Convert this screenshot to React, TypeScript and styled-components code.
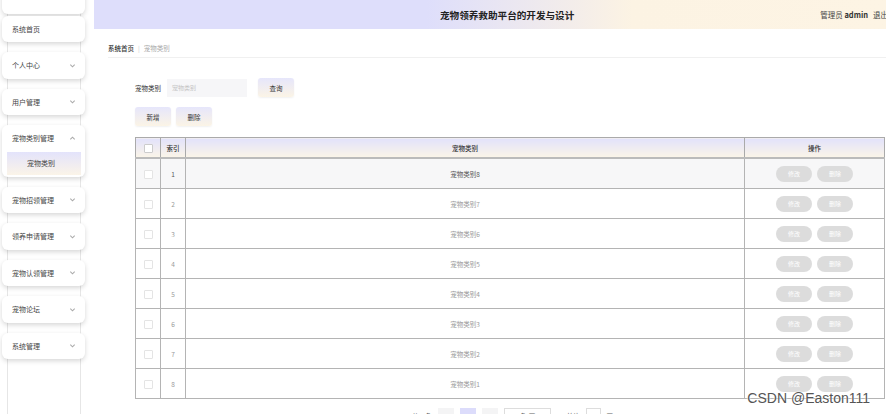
import styled, { createGlobalStyle } from "styled-components";

const GlobalStyle = createGlobalStyle`
  html, body {
    margin: 0;
    padding: 0;
    background: #fff;
    overflow: hidden;
  }
  body {
    font-family: "Noto Sans CJK SC", "Noto Sans", sans-serif;
    color: #333;
  }
`;

const Page = styled.div`
  display: flex;
  width: 886px;
  height: 414px;
  overflow: hidden;
  position: relative;
`;

const Sidebar = styled.aside`
  width: 94px;
  flex-shrink: 0;
`;

const Rail = styled.div`
  margin-left: 7px;
  width: 72px;
  height: 414px;
  border-left: 1px solid #e6e6e6;
  border-right: 1px solid #e6e6e6;
  display: flex;
  flex-direction: column;
  gap: 10px;
`;

const MenuCard = styled.div<{ $top?: number }>`
  margin-left: -6px;
  margin-right: -5px;
  margin-top: ${(p) => (p.$top !== undefined ? `${p.$top}px` : "0")};
  background: #fff;
  border-radius: 6px;
  box-shadow: 0 2px 5px rgba(0, 0, 0, 0.16);
  display: flex;
  flex-direction: column;
  flex-shrink: 0;
`;

const MenuHead = styled.div`
  height: 26.5px;
  display: flex;
  align-items: center;
  justify-content: space-between;
  padding: 0 9px 0 10px;
  font-size: 7px;
  color: #444;
`;

const Chevron = styled.svg`
  width: 7px;
  height: 7px;
  stroke: #aaa;
  fill: none;
  stroke-width: 1.2;
`;

const SubItem = styled.div`
  margin: 0 4px 2px 5px;
  height: 23px;
  display: flex;
  align-items: center;
  padding-left: 20px;
  font-size: 7px;
  color: #444;
  background: linear-gradient(180deg, #e3e3fb 0%, #fbf4e8 100%);
`;

const Main = styled.main`
  flex: 1;
  min-width: 0;
`;

const Header = styled.header`
  height: 29px;
  display: flex;
  align-items: center;
  background: linear-gradient(90deg, #dedefb 0%, #dedefb 42%, #fcf3e3 68%, #fdf4e4 100%);
`;

const Title = styled.h1`
  margin: 0 0 0 346px;
  font-size: 9.6px;
  font-weight: 700;
  color: #222;
  white-space: nowrap;
`;

const UserInfo = styled.div`
  margin-left: auto;
  margin-right: -2px;
  display: flex;
  gap: 5px;
  font-size: 7.5px;
  color: #444;
  white-space: nowrap;
  b {
    color: #333;
  }
`;

const Breadcrumb = styled.nav`
  margin: 11px 0 0 14px;
  height: 15px;
  padding-bottom: 2px;
  border-bottom: 1px solid #f0f0f0;
  display: flex;
  align-items: center;
  gap: 4px;
  font-size: 6.5px;
`;

const Crumb = styled.span<{ $current?: boolean }>`
  color: ${(p) => (p.$current ? "#aaa" : "#333")};
  font-weight: ${(p) => (p.$current ? 400 : 500)};
`;

const Sep = styled.span`
  color: #ccc;
`;

const Content = styled.section`
  padding-left: 41px;
  display: flex;
  flex-direction: column;
`;

const SearchRow = styled.div`
  margin-top: 20px;
  display: flex;
  align-items: center;
  height: 19px;
`;

const Label = styled.span`
  font-size: 6.5px;
  color: #333;
  width: 32px;
`;

const Input = styled.div`
  width: 80px;
  height: 18px;
  background: #f6f6f8;
  display: flex;
  align-items: center;
  padding-left: 5px;
  box-sizing: border-box;
  font-size: 6px;
  color: #c4c4c4;
  margin-right: 11px;
`;

const Button = styled.button`
  width: 36px;
  height: 19px;
  border: none;
  border-radius: 3px;
  padding: 0;
  font-family: inherit;
  font-size: 6.5px;
  color: #333;
  background: linear-gradient(180deg, #e6e6fb 0%, #fbf4e6 100%);
  box-shadow: 0 1px 2px rgba(0, 0, 0, 0.06);
`;

const ActionRow = styled.div`
  margin-top: 10px;
  display: flex;
  gap: 5px;
`;

const Table = styled.table`
  margin-top: 11px;
  width: 750px;
  border-collapse: collapse;
  table-layout: fixed;
  font-size: 6.5px;
  border: 1px solid #aaa;
`;

const Th = styled.th<{ $w?: number }>`
  width: ${(p) => (p.$w ? `${p.$w}px` : "auto")};
  height: 19px;
  padding: 0;
  font-weight: 500;
  color: #333;
  border: 1px solid #aaa;
  border-bottom: 2px solid #bbb;
  background: linear-gradient(180deg, #e2e2fb 0%, #fbf5e8 100%);
`;

const Tr = styled.tr<{ $hover?: boolean }>`
  background: ${(p) => (p.$hover ? "#f7f7f8" : "#fff")};
  color: ${(p) => (p.$hover ? "#555" : "#9a9a9a")};
`;

const Td = styled.td`
  height: 29px;
  padding: 0;
  text-align: center;
  border: 1px solid #b4b4b4;
`;

const Check = styled.span<{ $dark?: boolean }>`
  display: inline-block;
  width: 7px;
  height: 7px;
  border: 1px solid ${(p) => (p.$dark ? "#ccc" : "#e4e4e4")};
  border-radius: 1px;
  background: #fff;
  vertical-align: middle;
`;

const Ops = styled.div`
  display: flex;
  justify-content: center;
  gap: 5px;
`;

const OpButton = styled.span`
  width: 36px;
  height: 16px;
  border-radius: 8px;
  background: #dcdcdc;
  color: #fff;
  font-size: 6px;
  display: flex;
  align-items: center;
  justify-content: center;
`;

const Pager = styled.div`
  margin: 9px 0 0 277px;
  display: flex;
  align-items: center;
  gap: 6px;
  font-size: 6.5px;
  color: #666;
`;

const PageBox = styled.span<{ $active?: boolean }>`
  width: 16px;
  height: 16px;
  display: flex;
  align-items: center;
  justify-content: center;
  background: ${(p) => (p.$active ? "#dcdcfb" : "#f4f4f5")};
  color: ${(p) => (p.$active ? "#333" : "#bbb")};
`;

const Select = styled.span`
  width: 47px;
  height: 16px;
  border: 1px solid #ddd;
  box-sizing: border-box;
  display: flex;
  align-items: center;
  padding-left: 8px;
  margin-right: 10px;
`;

const JumpInput = styled.span`
  width: 15px;
  height: 16px;
  border: 1px solid #ddd;
  box-sizing: border-box;
  display: flex;
  align-items: center;
  justify-content: center;
`;

const Watermark = styled.div`
  position: absolute;
  right: 16px;
  bottom: 8px;
  font-family: "Liberation Sans", "DejaVu Sans", sans-serif;
  font-size: 14px;
  color: #555;
  text-shadow: 0 0 2px #fff, 0 0 2px #fff;
`;

const Down = () => (
  <Chevron viewBox="0 0 8 8">
    <path d="M1.5 3 L4 5.5 L6.5 3" />
  </Chevron>
);

const Up = () => (
  <Chevron viewBox="0 0 8 8">
    <path d="M1.5 5 L4 2.5 L6.5 5" />
  </Chevron>
);

const menus = [
  { title: "个人中心" },
  { title: "用户管理" },
  { title: "宠物类别管理", open: true, sub: "宠物类别" },
  { title: "宠物招领管理" },
  { title: "领养申请管理" },
  { title: "宠物认领管理" },
  { title: "宠物论坛" },
  { title: "系统管理" },
];

const rows = [8, 7, 6, 5, 4, 3, 2, 1];

function App() {
  return (
    <>
      <GlobalStyle />
      <Page>
        <Sidebar>
          <Rail>
            <MenuCard $top={-13}>
              <MenuHead />
            </MenuCard>
            <MenuCard $top={-8}>
              <MenuHead>系统首页</MenuHead>
            </MenuCard>
            {menus.map((m) => (
              <MenuCard key={m.title}>
                <MenuHead>
                  {m.title}
                  {m.open ? <Up /> : <Down />}
                </MenuHead>
                {m.sub && <SubItem>{m.sub}</SubItem>}
              </MenuCard>
            ))}
          </Rail>
        </Sidebar>
        <Main>
          <Header>
            <Title>宠物领养救助平台的开发与设计</Title>
            <UserInfo>
              <span>
                管理员 <b>admin</b>
              </span>
              <span>退出</span>
            </UserInfo>
          </Header>
          <Breadcrumb>
            <Crumb>系统首页</Crumb>
            <Sep>|</Sep>
            <Crumb $current>宠物类别</Crumb>
          </Breadcrumb>
          <Content>
            <SearchRow>
              <Label>宠物类别</Label>
              <Input>宠物类别</Input>
              <Button>查询</Button>
            </SearchRow>
            <ActionRow>
              <Button>新增</Button>
              <Button>删除</Button>
            </ActionRow>
            <Table>
              <thead>
                <tr>
                  <Th $w={24}>
                    <Check $dark />
                  </Th>
                  <Th $w={24}>索引</Th>
                  <Th>宠物类别</Th>
                  <Th $w={139}>操作</Th>
                </tr>
              </thead>
              <tbody>
                {rows.map((n, i) => (
                  <Tr key={n} $hover={i === 0}>
                    <Td>
                      <Check />
                    </Td>
                    <Td>{i + 1}</Td>
                    <Td>宠物类别{n}</Td>
                    <Td>
                      <Ops>
                        <OpButton>修改</OpButton>
                        <OpButton>删除</OpButton>
                      </Ops>
                    </Td>
                  </Tr>
                ))}
              </tbody>
            </Table>
            <Pager>
              <span>共 8 条</span>
              <PageBox>‹</PageBox>
              <PageBox $active>1</PageBox>
              <PageBox>›</PageBox>
              <Select>10条/页</Select>
              <span>前往</span>
              <JumpInput>1</JumpInput>
              <span>页</span>
            </Pager>
          </Content>
        </Main>
        <Watermark>CSDN @Easton111</Watermark>
      </Page>
    </>
  );
}

export default App;
